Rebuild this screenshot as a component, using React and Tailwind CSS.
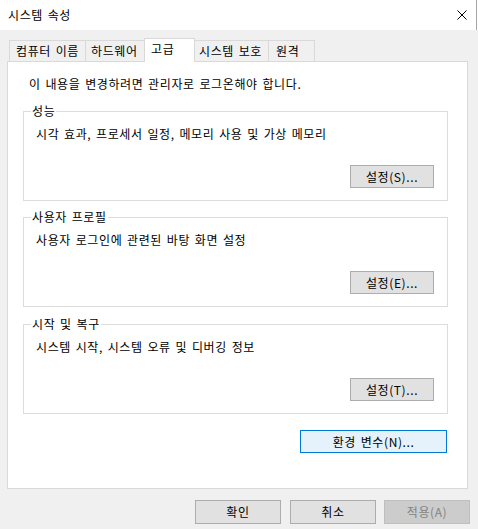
import React from "react";

const font = { fontFamily: '"Noto Sans CJK KR", "Noto Sans", sans-serif' };
const T = "text-[12px] leading-[16px] tracking-[0.6px] [word-spacing:1.5px] ";

function Tab({ label, className }) {
  return (
    <div className={"h-[21px] border-t border-[#d9d9d9] bg-[#f0f0f0] pt-[2px] whitespace-nowrap " + T + className}>
      {label}
    </div>
  );
}

function Btn({ children, className = "" }) {
  return (
    <div className={"h-[23px] flex items-center justify-center border border-[#adadad] bg-[#e1e1e1] whitespace-nowrap " + T + className}>
      {children}
    </div>
  );
}

function Group({ title, desc, btn, className = "" }) {
  return (
    <fieldset className={"ml-[15px] w-[425px] border border-[#dcdcdc] flex flex-col pb-[12px] " + className}>
      <legend className={"ml-[7px] px-[1px] " + T}>{title}</legend>
      <div className={"mt-[7px] pl-[12px] whitespace-nowrap " + T}>{desc}</div>
      <div className="mt-[23px] flex justify-end pr-[13px]">
        <Btn className="w-[84px]">{btn}</Btn>
      </div>
    </fieldset>
  );
}

export default function App() {
  return (
    <div className="w-[478px] h-[529px] bg-[#f0f0f0] text-black overflow-hidden" style={font}>
      <div className="h-[30px] bg-white flex items-center relative">
        <div className={"pl-[8px] " + T}>시스템 속성</div>
        <div className="ml-auto mr-[11px] w-[10px] h-[10px]">
          <svg width="10" height="10" viewBox="0 0 10 10">
            <path d="M0.5 0.5 L9.5 9.5 M9.5 0.5 L0.5 9.5" stroke="#000" strokeWidth="1" fill="none" />
          </svg>
        </div>
        <div className="absolute right-[1px] top-0 h-[30px] w-px bg-[#a6a6a6]" />
      </div>

      <div className="mt-[8px] ml-[9px] h-[23px] flex items-end">
        <Tab label="컴퓨터 이름" className="w-[76px] border-l pl-[6px]" />
        <Tab label="하드웨어" className="w-[59px] border-l pl-[5px]" />
        <div className={"relative z-10 -mb-px h-[24px] w-[51px] border-t border-l border-r border-[#d9d9d9] bg-white pl-[6px] pt-[2px] " + T}>
          고급
        </div>
        <Tab label="시스템 보호" className="w-[73px] pl-[4px]" />
        <Tab label="원격" className="w-[47px] border-l border-r pl-[7px]" />
      </div>

      <div className="ml-[7px] w-[461px] h-[428px] border border-[#d9d9d9] bg-white flex flex-col">
        <div className={"mt-[14px] pl-[21px] " + T}>
          이 내용을 변경하려면 관리자로 로그온해야 합니다.
        </div>
        <Group
          className="mt-[11px]"
          title="성능"
          desc="시각 효과, 프로세서 일정, 메모리 사용 및 가상 메모리"
          btn="설정(S)..."
        />
        <Group
          className="mt-[8px]"
          title="사용자 프로필"
          desc="사용자 로그인에 관련된 바탕 화면 설정"
          btn="설정(E)..."
        />
        <Group
          className="mt-[9px]"
          title="시작 및 복구"
          desc="시스템 시작, 시스템 오류 및 디버깅 정보"
          btn="설정(T)..."
        />
        <div className="mt-[16px] flex justify-end pr-[20px]">
          <div className={"w-[147px] h-[23px] flex items-center justify-center border border-[#0078d7] bg-[#e5f1fb] " + T}>
            환경 변수(N)...
          </div>
        </div>
      </div>

      <div className="mt-[11px] flex justify-end pr-[8px]">
        <Btn className="w-[86px] h-[24px]">확인</Btn>
        <Btn className="w-[86px] h-[24px] ml-[9px]">취소</Btn>
        <div className={"w-[86px] h-[24px] ml-[8px] flex items-center justify-center border border-[#bfbfbf] bg-[#cccccc] text-[#838383] " + T}>
          적용(A)
        </div>
      </div>
    </div>
  );
}
